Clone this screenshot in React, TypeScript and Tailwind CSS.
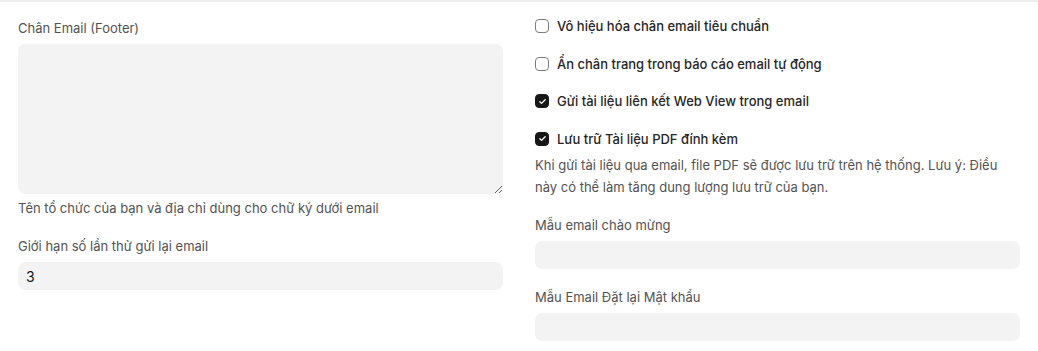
import { useState } from "react";

const CheckRow = ({ label, defaultChecked }: { label: string; defaultChecked?: boolean }) => {
  const [checked, setChecked] = useState(!!defaultChecked);
  return (
    <label className="flex h-5 items-center gap-2 cursor-pointer select-none">
      <span
        onClick={() => setChecked(!checked)}
        className={`flex h-[14px] w-[14px] shrink-0 items-center justify-center rounded-[4px] border ${
          checked ? "border-[#171717] bg-[#171717]" : "border-[#7c7c7c] bg-white"
        }`}
      >
        {checked && (
          <svg viewBox="0 0 12 12" className="h-[9px] w-[9px]" fill="none">
            <path d="M2.5 6.2l2.3 2.3 4.7-4.9" stroke="white" strokeWidth={1.8} strokeLinecap="round" strokeLinejoin="round" />
          </svg>
        )}
      </span>
      <span className="text-[13px] font-medium leading-4 text-[#262626]">{label}</span>
    </label>
  );
};

export default function App() {
  return (
    <div
      className="min-h-[351px] border-t-2 border-[#ededed] bg-white px-[18px]"
      style={{ fontFamily: "Inter, 'Noto Sans', sans-serif" }}
    >
      <div className="grid grid-cols-2 gap-8">
        {/* Left column */}
        <div className="pt-[18px]">
          <div className="text-[13px] leading-4 text-[#525252]">Chân Email (Footer)</div>
          <textarea className="mt-2 block h-[150px] w-full rounded-[7px] bg-[#f3f3f3] px-2 py-1.5 text-[14px] text-[#171717] outline-none" />
          <div className="mt-1.5 text-[13px] leading-4 text-[#525252]">
            Tên tổ chức của bạn và địa chỉ dùng cho chữ ký dưới email
          </div>
          <div className="mt-[22px] text-[13px] leading-4 text-[#525252]">Giới hạn số lần thử gửi lại email</div>
          <input
            defaultValue="3"
            className="mt-2 block h-7 w-full rounded-[7px] bg-[#f3f3f3] px-2 text-[14px] text-[#171717] outline-none"
          />
        </div>

        {/* Right column */}
        <div className="pt-[14px]">
          <div className="flex flex-col gap-[17.5px]">
            <CheckRow label="Vô hiệu hóa chân email tiêu chuẩn" />
            <CheckRow label="Ẩn chân trang trong báo cáo email tự động" />
            <CheckRow label="Gửi tài liệu liên kết Web View trong email" defaultChecked />
            <CheckRow label="Lưu trữ Tài liệu PDF đính kèm" defaultChecked />
          </div>
          <p className="mt-[5px] text-[13px] leading-[22px] text-[#525252]">
            Khi gửi tài liệu qua email, file PDF sẽ được lưu trữ trên hệ thống. Lưu ý: Điều này có thể làm tăng dung lượng lưu trữ của bạn.
          </p>
          <div className="mt-[19px] text-[13px] leading-4 text-[#525252]">Mẫu email chào mừng</div>
          <input className="mt-2 block h-7 w-full rounded-[7px] bg-[#f3f3f3] px-2 text-[14px] outline-none" />
          <div className="mt-5 text-[13px] leading-4 text-[#525252]">Mẫu Email Đặt lại Mật khẩu</div>
          <input className="mt-2 block h-7 w-full rounded-[7px] bg-[#f3f3f3] px-2 text-[14px] outline-none" />
        </div>
      </div>
    </div>
  );
}
